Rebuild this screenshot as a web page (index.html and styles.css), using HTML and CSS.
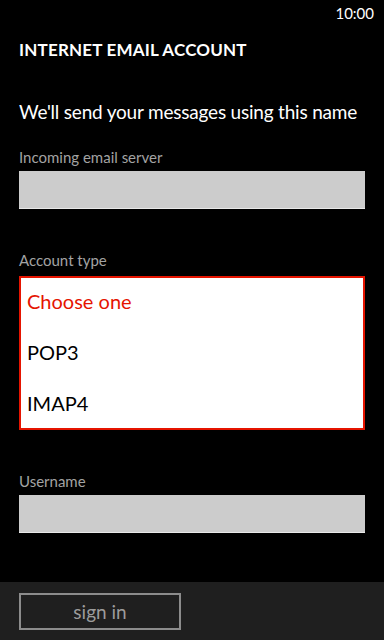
FILE: index.html
```html
<!DOCTYPE html>
<html>
<head>
<meta charset="utf-8">
<link rel="stylesheet" href="styles.css">
</head>
<body>
<div class="status"><span class="time">10:00</span></div>
<main class="page">
  <h1 class="title">INTERNET EMAIL ACCOUNT</h1>
  <p class="intro">We'll send your messages using this name</p>
  <label class="label label-first">Incoming email server</label>
  <div class="input"></div>
  <label class="label">Account type</label>
  <div class="picker">
    <div class="option option-selected">Choose one</div>
    <div class="option">POP3</div>
    <div class="option">IMAP4</div>
  </div>
  <label class="label">Username</label>
  <div class="input"></div>
  <p class="hidden-line">Download new content from this account</p>
</main>
<footer class="appbar">
  <button class="btn">sign in</button>
</footer>
</body>
</html>
```
FILE: styles.css
```css
html, body {
  margin: 0;
  padding: 0;
  background: #000;
  color: #fff;
  font-family: Lato, "Open Sans", sans-serif;
  overflow: hidden;
  height: 640px;
}
.status {
  height: 32px;
  display: flex;
  justify-content: flex-end;
  align-items: flex-start;
  padding-right: 10px;
}
.time {
  font-size: 15px;
  line-height: 20px;
  margin-top: 3px;
  color: #fff;
}
.page {
  padding: 0 19px;
  display: flex;
  flex-direction: column;
}
.title {
  margin: 8px 0 0;
  font-size: 17px;
  font-weight: 700;
  line-height: 20px;
  letter-spacing: 0.2px;
}
.intro {
  margin: 40px 0 0;
  font-size: 19px;
  line-height: 24px;
  letter-spacing: -0.2px;
  white-space: nowrap;
}
.label {
  display: block;
  font-size: 15px;
  line-height: 20px;
  color: #a3a3a3;
  margin-top: 41px;
}
.label-first {
  margin-top: 23px;
}
.input {
  height: 37px;
  background: #cccccc;
  border-bottom: 1px solid #e8e8e8;
  margin-top: 4px;
}
.picker {
  margin-top: 6px;
  background: #fff;
  border: 2px solid #e51400;
  padding: 11px 6px 13px;
  display: flex;
  flex-direction: column;
  gap: 27px;
}
.option {
  font-size: 20px;
  line-height: 24px;
  color: #000;
}
.option-selected {
  color: #e51400;
}
.hidden-line {
  margin: 44px 0 0;
  font-size: 19px;
  line-height: 24px;
  white-space: nowrap;
}
.appbar {
  position: fixed;
  left: 0;
  right: 0;
  bottom: 0;
  height: 58px;
  background: #1f1f1f;
  padding: 11px 19px 0;
  box-sizing: border-box;
}
.btn {
  width: 162px;
  height: 37px;
  background: transparent;
  border: 2px solid #8c8c8c;
  color: #9c9c9c;
  font-family: inherit;
  font-size: 19px;
  line-height: 24px;
  padding: 0;
}
```
